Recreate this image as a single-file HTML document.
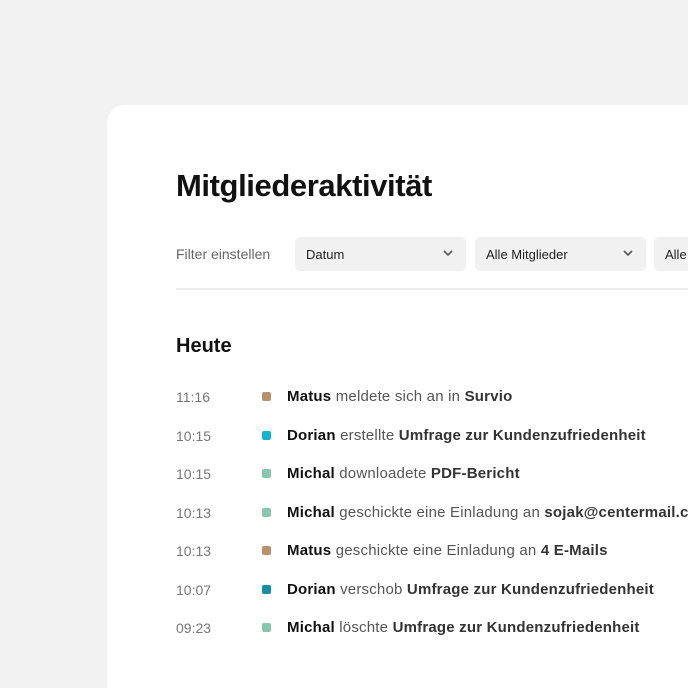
<!DOCTYPE html>
<html><head><meta charset="utf-8"><style>
*{margin:0;padding:0;box-sizing:border-box}
html,body{width:688px;height:688px;overflow:hidden}
body{background:#f1f2f1;font-family:"Liberation Sans",sans-serif;position:relative}
.card{position:absolute;left:107px;top:105px;width:600px;height:600px;background:#fff;border-radius:18px}
h1{position:absolute;left:176px;top:168px;font-size:31px;font-weight:700;color:#111;letter-spacing:-0.4px}
.fl{position:absolute;left:176px;top:246px;font-size:14px;color:#666}
.dd{position:absolute;top:237px;height:34px;width:171px;background:#f1f1f1;border-radius:5px;font-size:13px;color:#222;padding:10px 0 0 11px}
.dd svg{position:absolute;right:13px;top:13px}
.hr{position:absolute;left:176px;top:288px;width:520px;height:2px;background:#ececec}
h2{position:absolute;left:176px;top:335px;font-size:20px;font-weight:700;color:#111}
.row{position:absolute;left:0;height:20px;font-size:15px;white-space:nowrap}
.t{position:absolute;left:176px;top:2px;font-size:14px;color:#777}
.d{position:absolute;left:262px;top:5px;width:9px;height:9px;border-radius:2px}
.x{position:absolute;left:287px;top:1px;color:#555;letter-spacing:0.2px}
.x b{color:#111}.x i{font-style:normal;font-weight:700;color:#333}
</style></head><body>
<div class="card"></div>
<h1>Mitgliederaktivität</h1>
<div class="fl">Filter einstellen</div>
<div class="dd" style="left:295px">Datum<svg width="10" height="7"><path d="M1 1l4 4 4-4" stroke="#555" stroke-width="1.6" fill="none"/></svg></div>
<div class="dd" style="left:475px">Alle Mitglieder<svg width="10" height="7"><path d="M1 1l4 4 4-4" stroke="#555" stroke-width="1.6" fill="none"/></svg></div>
<div class="dd" style="left:654px">Alle</div>
<div class="hr"></div>
<h2>Heute</h2>
<div class="row" style="top:387px"><span class="t">11:16</span><span class="d" style="background:#b8926a"></span><span class="x"><b>Matus</b> meldete sich an in <i>Survio</i></span></div>
<div class="row" style="top:426px"><span class="t">10:15</span><span class="d" style="background:#16b4cc"></span><span class="x"><b>Dorian</b> erstellte <i>Umfrage zur Kundenzufriedenheit</i></span></div>
<div class="row" style="top:464px"><span class="t">10:15</span><span class="d" style="background:#86c6ae"></span><span class="x"><b>Michal</b> downloadete <i>PDF-Bericht</i></span></div>
<div class="row" style="top:503px"><span class="t">10:13</span><span class="d" style="background:#86c6ae"></span><span class="x"><b>Michal</b> geschickte eine Einladung an <i>sojak@centermail.com</i></span></div>
<div class="row" style="top:541px"><span class="t">10:13</span><span class="d" style="background:#b8926a"></span><span class="x"><b>Matus</b> geschickte eine Einladung an <i>4 E-Mails</i></span></div>
<div class="row" style="top:580px"><span class="t">10:07</span><span class="d" style="background:#178fa2"></span><span class="x"><b>Dorian</b> verschob <i>Umfrage zur Kundenzufriedenheit</i></span></div>
<div class="row" style="top:618px"><span class="t">09:23</span><span class="d" style="background:#86c6ae"></span><span class="x"><b>Michal</b> löschte <i>Umfrage zur Kundenzufriedenheit</i></span></div>
</body></html>
